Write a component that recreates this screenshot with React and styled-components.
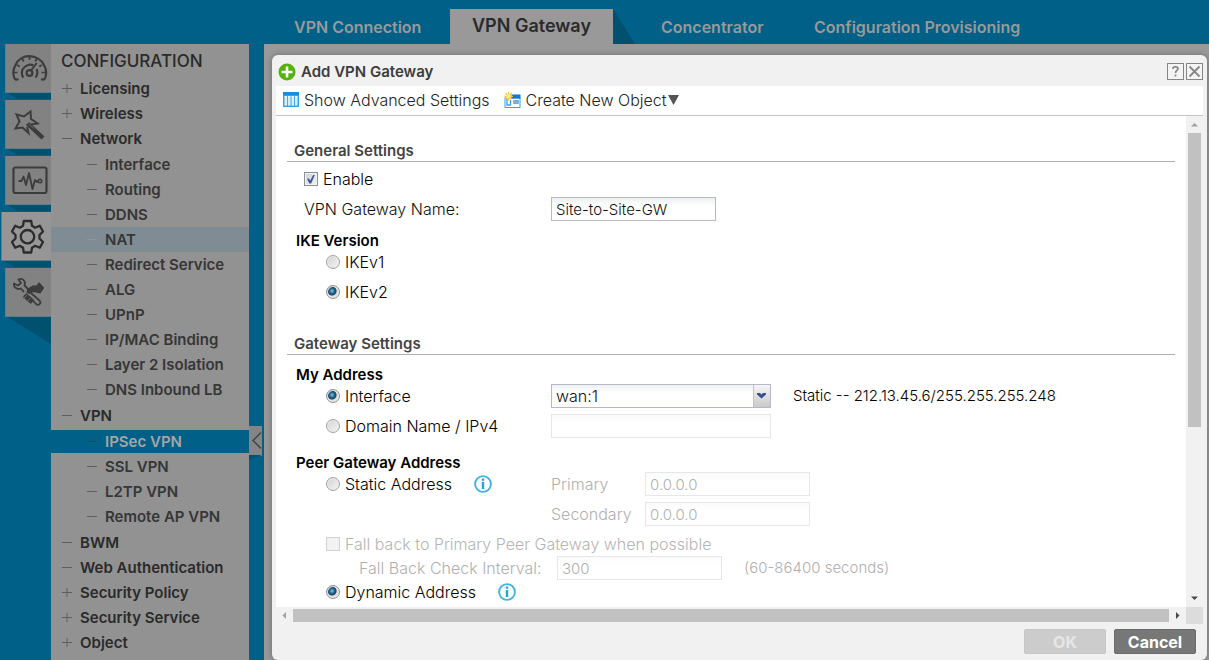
import React, { useState } from "react";
import styled, { createGlobalStyle, css } from "styled-components";

const teal = "#006087";
const tealShade = "#005070";
const panel = "#929292";
const chrome = "#f1f1f1";

const GlobalStyle = createGlobalStyle`
  * { box-sizing: border-box; }
  body {
    margin: 0;
    background: ${teal};
    font-family: Inter, "Open Sans", sans-serif;
    font-size: 15px;
    line-height: 20px;
    color: #111;
  }
  button, input, select { font: inherit; color: inherit; }
`;

const Page = styled.div`
  display: flex;
  height: 100vh;
  overflow: hidden;
`;

/* ---------- left rail ---------- */

const Rail = styled.nav`
  flex: none;
  width: 51px;
  padding-top: 44px;
  display: flex;
  flex-direction: column;
  align-items: flex-end;
  gap: 7px;
`;

const RailButton = styled.button`
  position: relative;
  width: ${(p) => (p.$active ? 50 : 46)}px;
  height: 49px;
  border: 0;
  border-left: 1px solid #5d7f8c;
  border-bottom: 1px solid #5d7f8c;
  background: ${(p) => (p.$active ? "#969696" : "#828282")};
  color: ${(p) => (p.$active ? "#2c2c2c" : "#3c3c3c")};
  display: flex;
  align-items: center;
  justify-content: ${(p) => (p.$active ? "flex-start" : "center")};
  padding: 0 0 0 ${(p) => (p.$active ? 6 : 0)}px;

  &::after {
    content: "";
    position: absolute;
    z-index: -1;
    left: 0;
    right: 0;
    top: 100%;
    height: ${(p) => (p.$last ? 28 : 7)}px;
    background: ${tealShade};
    clip-path: ${(p) =>
      p.$last
        ? "polygon(0 0, 100% 0, 100% 100%)"
        : "polygon(0 0, 100% 0, 100% 100%, 26% 100%)"};
  }

  svg { flex: none; width: 38px; height: 38px; }
`;

/* ---------- configuration tree ---------- */

const Side = styled.aside`
  flex: none;
  width: 198px;
  margin-top: 44px;
  background: ${panel};
  overflow: hidden;
`;

const SideTitle = styled.h1`
  margin: 0;
  height: 32px;
  padding: 2px 0 0 10px;
  font-size: 17px;
  line-height: 30px;
  font-weight: 500;
  color: #2a2a2a;
`;

const TreeList = styled.ul`
  list-style: none;
  margin: 0;
  padding: ${(p) => (p.$nested ? "1px 0" : 0)};
`;

const TreeLink = styled.a`
  display: flex;
  align-items: center;
  gap: 8px;
  height: 25px;
  padding-left: ${(p) => (p.$child ? 36 : 11)}px;
  font-weight: 600;
  text-decoration: none;
  white-space: nowrap;
  color: ${(p) => (p.$child ? "#363636" : "#2a2a2a")};
  ${(p) => p.$state === "hover" && css`background: #7f8c93;`}
  ${(p) =>
    p.$state === "current" &&
    css`
      border: solid ${panel};
      border-width: 1px 0;
      background: ${teal};
      color: #a5a5a5;
    `}
`;

const Mark = styled.svg`
  flex: none;
  width: 10px;
  height: 11px;
  color: ${(p) => (p.$state === "current" ? "#1a4a60" : p.$state === "hover" ? "#8b979d" : "#5e5e5e")};
`;

const Collapse = styled.button`
  align-self: flex-start;
  position: relative;
  margin-top: 426px;
  width: 13px;
  height: 30px;
  padding: 0;
  border: 0;
  border-bottom: 1px solid #6f8b96;
  background: #858585;
  color: #444;

  &::after {
    content: "";
    position: absolute;
    left: 0;
    top: 100%;
    width: 13px;
    height: 5px;
    background: ${tealShade};
    clip-path: polygon(0 0, 100% 0, 0 100%);
  }
  svg { display: block; width: 13px; height: 29px; }
`;

const Gutter = styled.div`
  flex: none;
  width: 15px;
  display: flex;
`;

/* ---------- main area ---------- */

const Main = styled.main`
  flex: 1;
  min-width: 0;
  display: flex;
  flex-direction: column;
`;

const Tabs = styled.nav`
  flex: none;
  height: 44px;
  display: flex;
  align-items: flex-end;
  padding-left: 6px;
`;

const Tab = styled.a`
  position: relative;
  flex: none;
  min-width: ${(p) => p.$width}px;
  height: 35px;
  padding-left: ${(p) => (p.$active ? 22 : 24)}px;
  margin-right: ${(p) => (p.$active ? 24 : 0)}px;
  background: ${(p) => (p.$active ? "#999" : "transparent")};
  color: ${(p) => (p.$active ? "#2a2a2a" : "#999")};
  font-size: ${(p) => (p.$active ? 18 : 16)}px;
  line-height: ${(p) => (p.$active ? 34 : 36)}px;
  font-weight: 600;
  text-decoration: none;
  white-space: nowrap;

  ${(p) =>
    p.$active &&
    css`
      &::after {
        content: "";
        position: absolute;
        left: 100%;
        top: 0;
        width: 22px;
        height: 35px;
        background: ${tealShade};
        clip-path: polygon(0 0, 100% 100%, 0 100%);
      }
    `}
`;

const Workspace = styled.div`
  flex: 1;
  min-height: 0;
  display: flex;
  padding: 11px 2px 0 8px;
  background: #999;
`;

const Dialog = styled.section`
  flex: 1;
  min-width: 0;
  display: flex;
  flex-direction: column;
  padding: 0 4px;
  border-radius: 6px;
  background: ${chrome};
  box-shadow: 0 0 6px rgba(0, 0, 0, 0.3);
`;

const TitleBar = styled.header`
  flex: none;
  height: 31px;
  display: flex;
  align-items: center;
  gap: 5px;
  padding: 2px 0 0 2px;
`;

const Title = styled.h2`
  flex: 1;
  margin: 0;
  font-size: 15px;
  font-weight: 600;
  color: #3c3c3c;
`;

const WindowButtons = styled.div`
  display: flex;
  gap: 2px;
`;

const WindowButton = styled.button`
  width: 17px;
  height: 17px;
  padding: 0;
  border: 1px solid #858585;
  background: #f4f4f4;
  color: #888;
  svg { display: block; width: 15px; height: 15px; }
`;

const Toolbar = styled.div`
  flex: none;
  height: 30px;
  display: flex;
  align-items: center;
  gap: 14px;
  padding: 0 0 2px 7px;
  border-bottom: 1px solid #c4c4c4;
  background: #fff;
`;

const ToolButton = styled.button`
  display: flex;
  align-items: center;
  gap: 5px;
  padding: 0;
  border: 0;
  background: none;
  font-size: 16px;
  font-weight: 300;
  color: #222;
  white-space: nowrap;
`;

const ToolText = styled.span`
  display: flex;
  align-items: center;
  gap: 1px;
`;

const ScrollGrid = styled.div`
  flex: 1;
  min-height: 0;
  display: grid;
  grid-template-columns: minmax(0, 1fr) 17px;
  grid-template-rows: minmax(0, 1fr) 17px;
`;

const Form = styled.form`
  overflow: hidden;
  padding: 24px 11px 0;
  background: #fff;
  font-weight: 300;
  white-space: nowrap;
`;

const Track = styled.div`
  display: flex;
  flex-direction: ${(p) => (p.$vertical ? "column" : "row")};
  background: ${chrome};
  svg { flex: none; width: 17px; height: 17px; }
`;

const Thumb = styled.div`
  flex: ${(p) => p.$grow};
  margin: ${(p) => (p.$vertical ? "0 2px" : "2px 0")};
  background: #c1c1c1;
`;

const TrackRest = styled.div`
  flex: ${(p) => p.$grow};
`;

const Corner = styled.div`
  background: #dcdcdc;
`;

const Footer = styled.footer`
  flex: none;
  height: 36px;
  display: flex;
  justify-content: flex-end;
  align-items: flex-start;
  gap: 8px;
  padding: 5px 7px 0 0;
`;

const ActionButton = styled.button`
  width: 82px;
  height: 25px;
  padding: 0;
  border: 1px solid #6a6a6a;
  border-radius: 2px;
  background: #777;
  color: #fff;
  font-size: 16px;
  font-weight: 700;
  &:disabled {
    border-color: #c6c6c6;
    background: #ccc;
    color: #e6e6e6;
  }
`;

/* ---------- form parts ---------- */

const SectionTitle = styled.h3`
  margin: ${(p) => (p.$spaced ? 29 : 0)}px 0 0;
  padding-left: 7px;
  height: 22px;
  border-bottom: 1px solid #b0b0b0;
  font-size: 15px;
  line-height: 22px;
  font-weight: 600;
  color: #444;
`;

const Rows = styled.div`
  display: flex;
  flex-direction: column;
  gap: ${(p) => (p.$tight ? 0 : 6)}px;
  margin-top: ${(p) => p.$top || 0}px;
`;

const SubTitle = styled.h4`
  margin: ${(p) => p.$top}px 0 0;
  padding-left: 9px;
  height: 20px;
  font-size: 15px;
  line-height: 22px;
  font-weight: 600;
  color: #000;
`;

const Row = styled.div`
  display: flex;
  align-items: center;
  height: 24px;
`;

const LabelCell = styled.div`
  flex: none;
  width: ${(p) => p.$width || 264}px;
  padding-left: ${(p) => p.$indent}px;
  display: flex;
  align-items: center;
  gap: 22px;
`;

const Choice = styled.label`
  display: flex;
  align-items: center;
  gap: 5px;
  font-size: 16px;
  color: ${(p) => (p.$disabled ? "#b5b5b5" : "#000")};
`;

const FieldLabel = styled.label`
  flex: none;
  width: ${(p) => (p.$width ? `${p.$width}px` : "auto")};
  font-size: 16px;
  color: ${(p) => (p.$disabled ? "#b0b0b0" : "#111")};
`;

const Note = styled.span`
  margin-left: 22px;
  color: ${(p) => (p.$disabled ? "#b0b0b0" : "#000")};
`;

const field = css`
  height: 24px;
  padding: 0 4px;
  border: 1px solid #b5b8c8;
  border-radius: 0;
  background: linear-gradient(#eef1f1, #fff 8px);
  outline: 0;
  font-weight: 300;
`;

const TextBox = styled.input`
  ${field}
  width: ${(p) => (p.$wide ? 220 : 165)}px;
  &:disabled {
    border-color: #e6e7ec;
    background: linear-gradient(#fafbfb, #fff 8px);
    color: #b0b0b0;
  }
`;

const SelectWrap = styled.div`
  position: relative;
  display: flex;
  svg {
    position: absolute;
    right: 1px;
    top: 1px;
    width: 17px;
    height: 22px;
    pointer-events: none;
  }
`;

const Select = styled.select`
  ${field}
  appearance: none;
  width: 220px;
  font-size: 16px;
`;

const Radio = styled.input`
  appearance: none;
  width: 14px;
  height: 14px;
  margin: 0;
  border: 1px solid #a2a2a2;
  border-radius: 50%;
  background: linear-gradient(135deg, #d2d2d2, #f5f5f5);
  box-shadow: inset 0 0 0 1px #ececec;
  &:checked {
    border-color: #8d9299;
    background: radial-gradient(circle at 5px 5px, #8cc9e8 0, #2b78a2 2px, #173f61 4px, #dcdcdc 5px);
  }
`;

const Check = styled.input`
  appearance: none;
  width: 14px;
  height: 14px;
  margin: 0;
  border: 1px solid #8a8f96;
  background: linear-gradient(135deg, #cfd0d2, #f4f4f4);
  box-shadow: inset 0 0 0 1px #f2f2f2;
  display: grid;
  place-items: center;
  &:disabled { border-color: #d2d2d2; background: #f2f2f2; }
  &:checked::after {
    content: "";
    width: 8px;
    height: 9px;
    background: #41549f;
    clip-path: polygon(0 48%, 24% 44%, 40% 66%, 80% 0, 100% 0, 52% 100%, 30% 100%);
  }
`;

const InfoButton = styled.button`
  width: 18px;
  height: 18px;
  padding: 0;
  border: 0;
  background: none;
  svg { display: block; width: 18px; height: 18px; }
`;

/* ---------- icons ---------- */

const GaugeIcon = () => (
  <svg viewBox="0 0 38 38" fill="none" stroke="currentColor" strokeWidth="2">
    <path d="M8 29.500C7 31.500 5 31 4.200 28.500C3 25 3.200 20 5.500 16C8 10.500 13.500 7 19.500 7.200S31.500 10.500 34 16C36.300 20 36.500 25 35.300 28.500C34.500 31 32.500 31.500 31.500 29.500" strokeWidth="2.200" />
    <path d="M19.500 7v4M12 9.500l1.800 3M27 9.500l-1.800 3M7 16l2.800 1.600M32 16l-2.800 1.600M4 23.500h3.500M35 23.500h-3.500" strokeWidth="1.700" />
    <path d="M13.500 28.500C11 26 11.300 20.500 14.500 18S21.500 15.500 23.500 16.500M26.500 20C28 22.500 27.500 26.500 25.500 28.500" strokeWidth="2.200" />
    <circle cx="19.500" cy="24" r="2.900" strokeWidth="2.200" />
    <path d="M21 21.500L26.800 14" strokeWidth="2" />
  </svg>
);

const WandIcon = () => (
  <svg viewBox="0 0 38 38" fill="none" stroke="currentColor" strokeWidth="2">
    <path d="M17 22L18.500 28L12.500 22.500L5.500 23.500L9.500 16.500L6.500 9.500L14 11.500L20.500 6.500L21 14L27.500 18.500L21 19.500" />
    <path d="M17.500 18.500L33 33" strokeWidth="4.400" />
    <path d="M18.500 18.500L24 23.500" stroke="#6a6a6a" strokeWidth="1" />
  </svg>
);

const MonitorIcon = () => (
  <svg viewBox="0 0 38 38" fill="none" stroke="currentColor" strokeLinejoin="round">
    <rect x="3.500" y="6.500" width="33" height="25.500" rx="2" strokeWidth="2.200" />
    <path d="M8.500 20H11.500L13.500 15.500L16 24L19 12L22.500 28L25 19L27 21L28.500 20" strokeWidth="1.800" />
    <circle cx="30" cy="20" r="1.700" strokeWidth="1.600" />
  </svg>
);

const GearIcon = () => (
  <svg viewBox="0 0 38 38" fill="none" stroke="currentColor" strokeLinejoin="round">
    <path strokeWidth="2.300" d="M15.800 4H23.200L24 8.800L27.200 10.700L31.800 8.800L35 14.500L31.500 18V21.500L35 25L31.800 30.700L27.200 28.800L24 30.700L23.200 35.500H15.800L15 30.700L11.800 28.800L7.200 30.700L4 25L7.500 21.500V18L4 14.500L7.200 8.800L11.800 10.700L15 8.800Z" />
    <circle cx="19.500" cy="19.700" r="6.700" strokeWidth="2.300" />
  </svg>
);

const ToolsIcon = () => (
  <svg viewBox="0 0 38 38" fill="none" stroke="currentColor" strokeLinejoin="round" strokeLinecap="round">
    <path strokeWidth="1.800" d="M8.500 6.500C13 4.500 16 8.500 14.500 12.500L18 16M13.500 18.500L11 15.500C7 17 3.500 14.500 4 10.500L8 12.500L11 10L8.500 6.500" />
    <path fill="currentColor" strokeWidth="1.200" d="M18 16L23 13L27 12.800L29 10L33.500 15L30 20L26 19L22.500 18.500L19.500 20.500L17 19Z" />
    <path strokeWidth="1.800" d="M21.500 20.500L29.500 27.500C32 30.500 28.500 33 26 31L19.500 24" />
    <path strokeWidth="5" strokeLinecap="butt" d="M14.500 22L22.500 29" />
    <path strokeWidth="1" stroke="#6d6d6d" d="M16.500 22.500l-3 3M20 25.500l-3 3" />
  </svg>
);

const AddIcon = () => (
  <svg width="18" height="18" viewBox="0 0 18 18">
    <circle cx="9" cy="9" r="8.500" fill="#53b30c" />
    <path d="M9 3.500v11M3.500 9h11" stroke="#fff" strokeWidth="2.600" />
  </svg>
);

const TableIcon = () => (
  <svg width="16" height="15" viewBox="0 0 16 15">
    <rect width="16" height="15" fill="#2fa3ee" />
    <rect width="16" height="3" fill="#168ee8" />
    <path d="M1.500 4h2.500v9.500H1.500zM5 4h2.500v9.500H5zM8.500 4H11v9.500H8.500zM12 4h2.500v9.500H12z" fill="#fff" />
    <path d="M1.500 6h13M1.500 8h13M1.500 10h13M1.500 12h13" stroke="#7cc0ea" strokeWidth="0.600" />
  </svg>
);

const NewObjectIcon = () => (
  <svg width="17" height="16" viewBox="0 0 17 16">
    <rect x="1" y="6" width="15" height="9.500" fill="#fff" stroke="#35a4ea" />
    <rect x="7.500" y="2.500" width="9" height="4" fill="#0879e3" />
    <rect x="9" y="8" width="6" height="4" fill="#9ac6e4" />
    <path d="M9.500 9h5M9.500 11h5" stroke="#5a97c4" />
    <path d="M3 7v6h3.500V8" fill="none" stroke="#35a4ea" strokeWidth="1.300" />
    <path d="M4.500 0v8.500M0.500 4.300h8.500M1.500 1.300l6.200 6M7.700 1.300l-6.200 6" stroke="#f8c630" strokeWidth="1.300" />
    <circle cx="4.500" cy="4.300" r="2.200" fill="#ffe680" />
  </svg>
);

const CaretIcon = () => (
  <svg width="11" height="10" viewBox="0 0 11 10">
    <path d="M0 0h11L5.500 10z" fill="#555" />
  </svg>
);

const InfoIcon = () => (
  <svg viewBox="0 0 18 18">
    <circle cx="9" cy="9" r="7.900" fill="#fff" stroke="#3db4e2" strokeWidth="1.900" />
    <path d="M9 3.500v2.200M9 7v7" stroke="#1fa5da" strokeWidth="2.400" />
  </svg>
);

const HelpGlyph = () => (
  <svg viewBox="0 0 15 15" fill="none" stroke="currentColor" strokeWidth="1.700">
    <path d="M5 5V4C5 2.300 10 2.300 10 4.500C10 6.500 7.500 6.500 7.500 9M7.500 10.500v2" />
  </svg>
);

const CloseGlyph = () => (
  <svg viewBox="0 0 15 15" stroke="currentColor" strokeWidth="1.900">
    <path d="M2.500 2.500l10 10M12.500 2.500l-10 10" />
  </svg>
);

const Arrow = ({ d, dim }) => (
  <svg viewBox="0 0 17 17">
    <path d={d} fill={dim ? "#a0a0a0" : "#484848"} />
  </svg>
);

/* ---------- data ---------- */

const railItems = [
  { name: "Dashboard", Icon: GaugeIcon },
  { name: "Quick Setup", Icon: WandIcon },
  { name: "Monitor", Icon: MonitorIcon },
  { name: "Configuration", Icon: GearIcon, active: true },
  { name: "Maintenance", Icon: ToolsIcon },
];

const tree = [
  { name: "Licensing", closed: true },
  { name: "Wireless", closed: true },
  {
    name: "Network",
    children: [
      "Interface", "Routing", "DDNS", "NAT", "Redirect Service", "ALG", "UPnP",
      "IP/MAC Binding", "Layer 2 Isolation", "DNS Inbound LB",
    ],
  },
  { name: "VPN", children: ["IPSec VPN", "SSL VPN", "L2TP VPN", "Remote AP VPN"] },
  { name: "BWM" },
  { name: "Web Authentication" },
  { name: "Security Policy", closed: true },
  { name: "Security Service", closed: true },
  { name: "Object", closed: true },
];

const linkState = { NAT: "hover", "IPSec VPN": "current" };

const tabs = [
  { name: "VPN Connection", width: 180 },
  { name: "VPN Gateway", width: 163, active: true },
  { name: "Concentrator", width: 153 },
  { name: "Configuration Provisioning", width: 240 },
];

/* ---------- composed pieces ---------- */

const TreeNode = ({ name, closed, child }) => (
  <TreeLink href="#" $child={child} $state={linkState[name]}>
    <Mark viewBox="0 0 10 11" $state={linkState[name]} aria-hidden="true">
      <path d={closed ? "M0 5.500h10M5 1v9" : "M0 5.500h10"} stroke="currentColor" />
    </Mark>
    {name}
  </TreeLink>
);

const RadioChoice = ({ name, value, selected, onSelect }) => (
  <Choice>
    <Radio type="radio" name={name} checked={selected === value} onChange={() => onSelect(value)} />
    {value}
  </Choice>
);

const Info = ({ label }) => (
  <InfoButton type="button" aria-label={label}>
    <InfoIcon />
  </InfoButton>
);

export default function App() {
  const [enabled, setEnabled] = useState(true);
  const [ike, setIke] = useState("IKEv2");
  const [address, setAddress] = useState("Interface");
  const [peer, setPeer] = useState("Dynamic Address");

  return (
    <>
      <GlobalStyle />
      <Page>
        <Rail>
          {railItems.map(({ name, Icon, active }, i) => (
            <RailButton key={name} aria-label={name} $active={active} $last={i === railItems.length - 1}>
              <Icon />
            </RailButton>
          ))}
        </Rail>

        <Side>
          <SideTitle>CONFIGURATION</SideTitle>
          <TreeList>
            {tree.map((node) => (
              <li key={node.name}>
                <TreeNode name={node.name} closed={node.closed} />
                {node.children && (
                  <TreeList $nested>
                    {node.children.map((name) => (
                      <li key={name}>
                        <TreeNode name={name} child />
                      </li>
                    ))}
                  </TreeList>
                )}
              </li>
            ))}
          </TreeList>
        </Side>

        <Gutter>
          <Collapse aria-label="Collapse menu">
            <svg viewBox="0 0 13 29" fill="none" stroke="currentColor" strokeWidth="1.500">
              <path d="M12 6.500L4 14.500L12 22.500" />
            </svg>
          </Collapse>
        </Gutter>

        <Main>
          <Tabs>
            {tabs.map((t) => (
              <Tab key={t.name} href="#" $width={t.width} $active={t.active}>
                {t.name}
              </Tab>
            ))}
          </Tabs>

          <Workspace>
            <Dialog aria-label="Add VPN Gateway">
              <TitleBar>
                <AddIcon />
                <Title>Add VPN Gateway</Title>
                <WindowButtons>
                  <WindowButton aria-label="Help"><HelpGlyph /></WindowButton>
                  <WindowButton aria-label="Close"><CloseGlyph /></WindowButton>
                </WindowButtons>
              </TitleBar>

              <Toolbar>
                <ToolButton>
                  <TableIcon />
                  Show Advanced Settings
                </ToolButton>
                <ToolButton>
                  <NewObjectIcon />
                  <ToolText>
                    Create New Object
                    <CaretIcon />
                  </ToolText>
                </ToolButton>
              </Toolbar>

              <ScrollGrid>
                <Form>
                  <SectionTitle>General Settings</SectionTitle>
                  <Rows $top={5}>
                    <Row>
                      <LabelCell $indent={17}>
                        <Choice>
                          <Check type="checkbox" checked={enabled} onChange={() => setEnabled(!enabled)} />
                          Enable
                        </Choice>
                      </LabelCell>
                    </Row>
                    <Row>
                      <LabelCell $indent={17}>
                        <FieldLabel htmlFor="gateway-name">VPN Gateway Name:</FieldLabel>
                      </LabelCell>
                      <TextBox id="gateway-name" defaultValue="Site-to-Site-GW" />
                    </Row>
                  </Rows>

                  <SubTitle $top={9}>IKE Version</SubTitle>
                  <Rows>
                    {["IKEv1", "IKEv2"].map((v) => (
                      <Row key={v}>
                        <LabelCell $indent={39}>
                          <RadioChoice name="ike" value={v} selected={ike} onSelect={setIke} />
                        </LabelCell>
                      </Row>
                    ))}
                  </Rows>

                  <SectionTitle $spaced>Gateway Settings</SectionTitle>
                  <SubTitle $top={9}>My Address</SubTitle>
                  <Rows>
                    <Row>
                      <LabelCell $indent={39}>
                        <RadioChoice name="address" value="Interface" selected={address} onSelect={setAddress} />
                      </LabelCell>
                      <SelectWrap>
                        <Select aria-label="Interface">
                          <option>wan:1</option>
                        </Select>
                        <svg viewBox="0 0 17 22" aria-hidden="true">
                          <defs>
                            <linearGradient id="trigger" x2="0" y2="1">
                              <stop offset="0" stopColor="#f6f6f6" />
                              <stop offset="1" stopColor="#c9c9c9" />
                            </linearGradient>
                          </defs>
                          <rect width="17" height="22" fill="url(#trigger)" />
                          <path d="M0.500 0v22" stroke="#c0c2cf" />
                          <path d="M4 8h3l1.500 1.500L10 8h3v1.500L8.500 13.500L4 9.500z" fill="#34508f" />
                        </svg>
                      </SelectWrap>
                      <Note>Static -- 212.13.45.6/255.255.255.248</Note>
                    </Row>
                    <Row>
                      <LabelCell $indent={39}>
                        <RadioChoice name="address" value="Domain Name / IPv4" selected={address} onSelect={setAddress} />
                      </LabelCell>
                      <TextBox $wide disabled aria-label="Domain Name / IPv4" />
                    </Row>
                  </Rows>

                  <SubTitle $top={14}>Peer Gateway Address</SubTitle>
                  <Rows>
                    <Row>
                      <LabelCell $indent={39}>
                        <RadioChoice name="peer" value="Static Address" selected={peer} onSelect={setPeer} />
                        <Info label="About static address" />
                      </LabelCell>
                      <FieldLabel htmlFor="primary" $width={94} $disabled>Primary</FieldLabel>
                      <TextBox id="primary" disabled defaultValue="0.0.0.0" />
                    </Row>
                    <Row>
                      <LabelCell $indent={39} />
                      <FieldLabel htmlFor="secondary" $width={94} $disabled>Secondary</FieldLabel>
                      <TextBox id="secondary" disabled defaultValue="0.0.0.0" />
                    </Row>
                  </Rows>
                  <Rows $tight $top={6}>
                    <Row>
                      <LabelCell $indent={39}>
                        <Choice $disabled>
                          <Check type="checkbox" disabled />
                          Fall back to Primary Peer Gateway when possible
                        </Choice>
                      </LabelCell>
                    </Row>
                    <Row>
                      <LabelCell $indent={72} $width={270}>
                        <FieldLabel htmlFor="interval" $disabled>Fall Back Check Interval:</FieldLabel>
                      </LabelCell>
                      <TextBox id="interval" disabled defaultValue="300" />
                      <Note $disabled>(60-86400 seconds)</Note>
                    </Row>
                    <Row>
                      <LabelCell $indent={39}>
                        <RadioChoice name="peer" value="Dynamic Address" selected={peer} onSelect={setPeer} />
                        <Info label="About dynamic address" />
                      </LabelCell>
                    </Row>
                  </Rows>
                </Form>
                <Track $vertical aria-hidden="true">
                  <Arrow dim d="M5 10.500L8.500 7L12 10.500z" />
                  <Thumb $vertical $grow={294} />
                  <TrackRest $grow={163} />
                  <Arrow d="M5 6.500L8.500 10L12 6.500z" />
                </Track>
                <Track aria-hidden="true">
                  <Arrow dim d="M10 5L6.500 8.500L10 12z" />
                  <Thumb $grow={1} />
                  <Arrow d="M7 5L10.500 8.500L7 12z" />
                </Track>
                <Corner />
              </ScrollGrid>

              <Footer>
                <ActionButton disabled>OK</ActionButton>
                <ActionButton>Cancel</ActionButton>
              </Footer>
            </Dialog>
          </Workspace>
        </Main>
      </Page>
    </>
  );
}
